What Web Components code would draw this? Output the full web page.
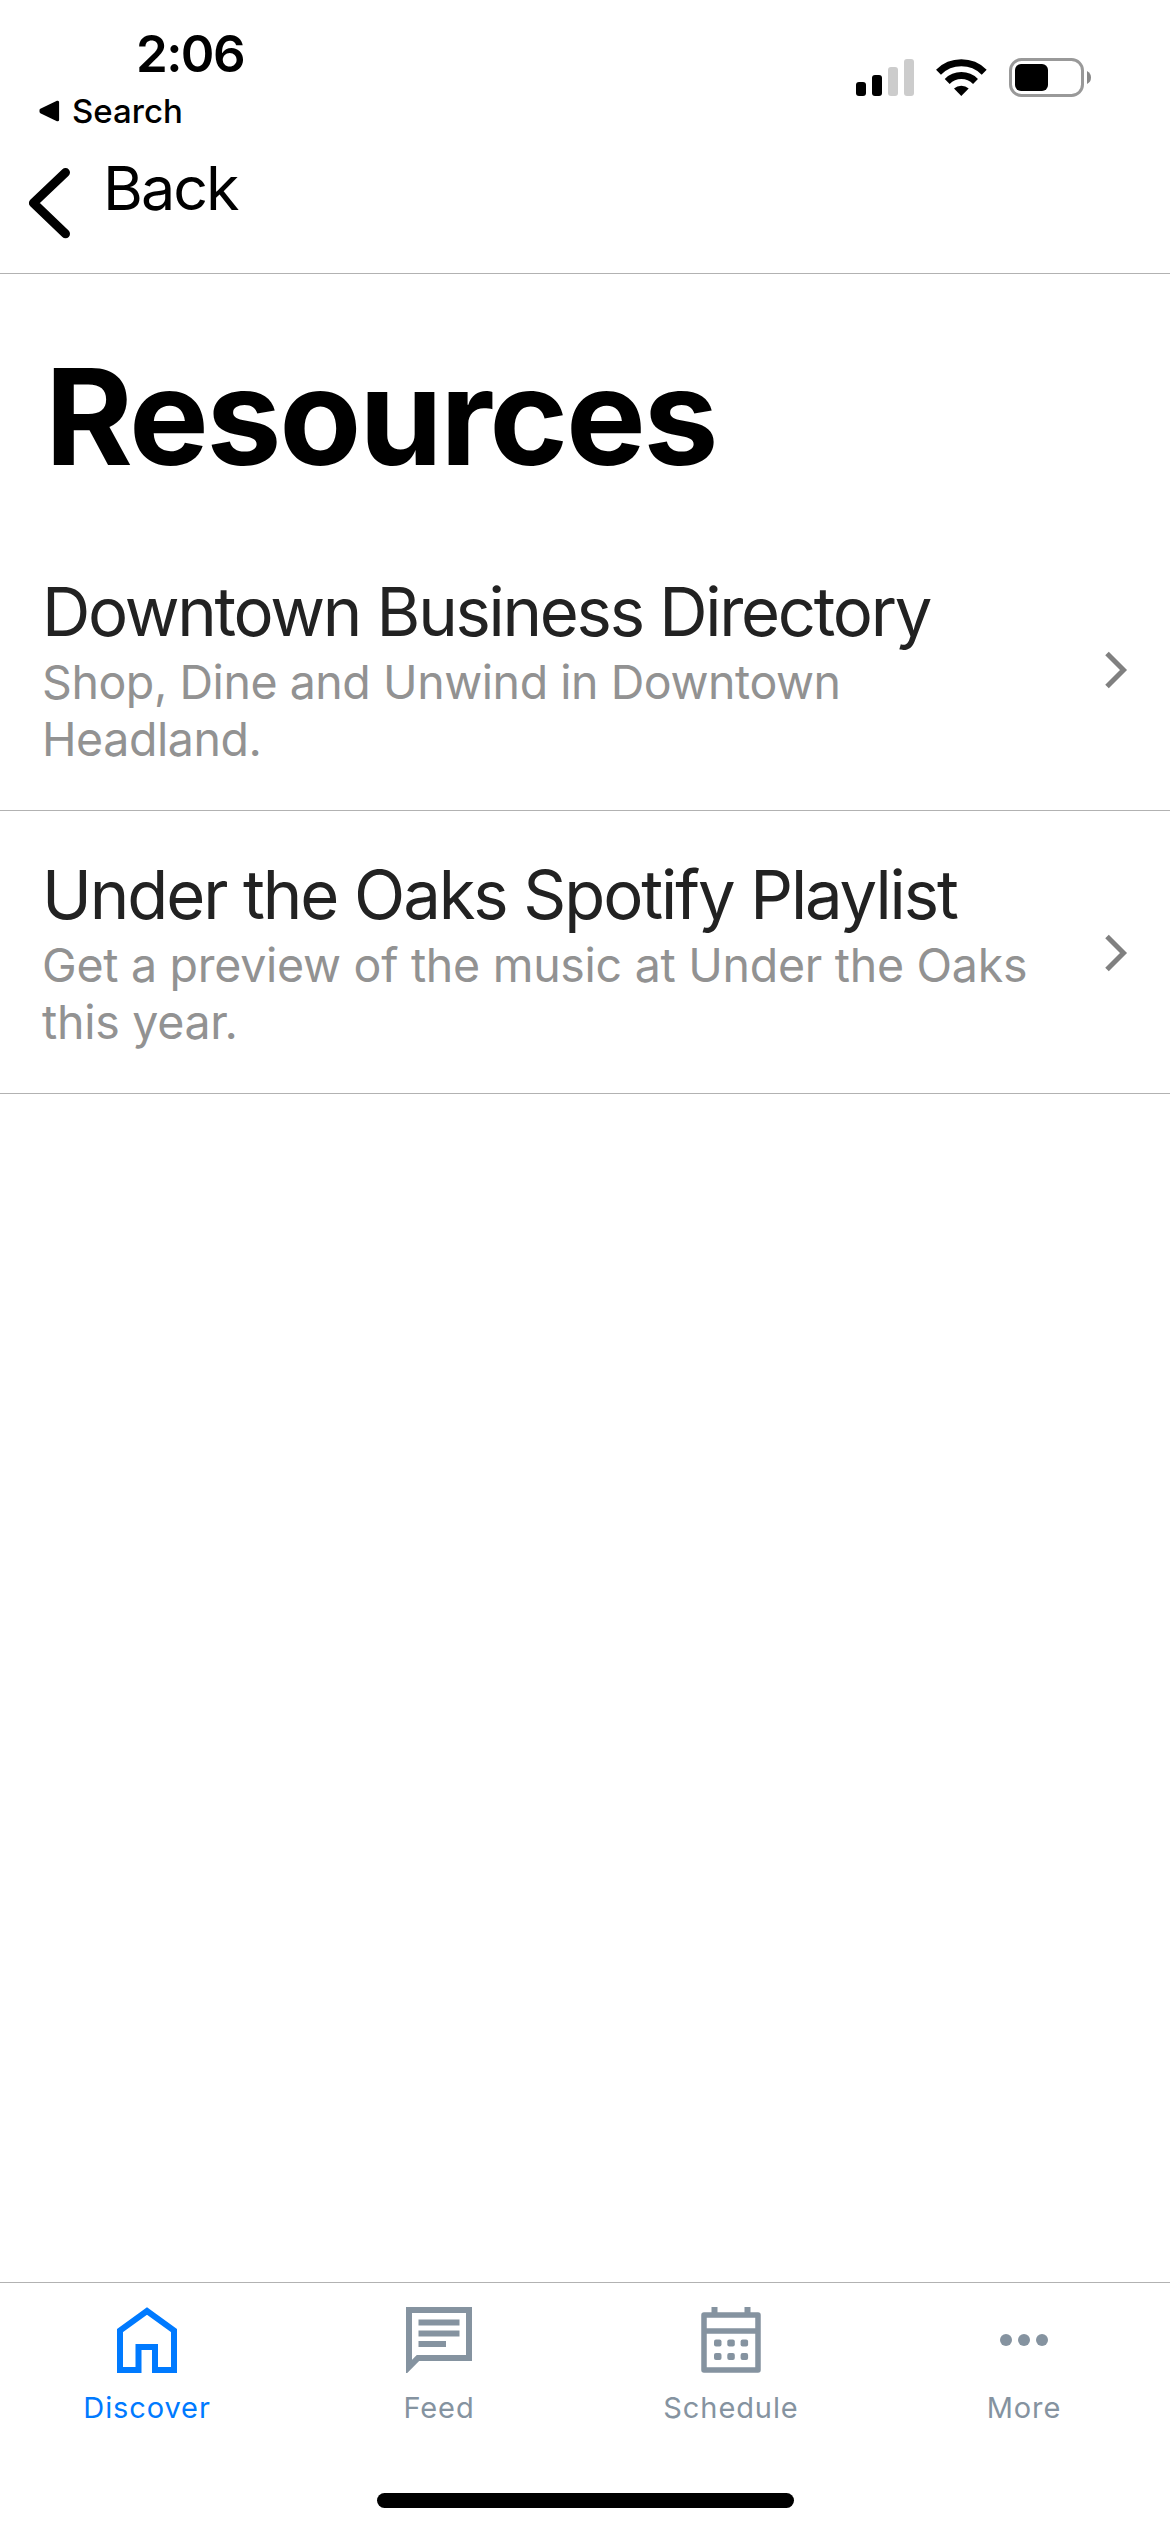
<!DOCTYPE html>
<html lang="en">
<head>
<meta charset="utf-8">
<title>Resources</title>
<style>
  html, body { margin: 0; background: #fff; }
  body { font-family: Inter, "Liberation Sans", sans-serif; color: #000; }
</style>
</head>
<body>
<app-screen>
  <status-bar slot="top" time="2:06" origin="Search"></status-bar>
  <nav-header slot="top">Back</nav-header>
  <page-title>Resources</page-title>
  <resource-item style="--title-tracking: -2.29px; --sub-tracking: -0.45px">
    <span slot="title">Downtown Business Directory</span>
    <span>Shop, Dine and Unwind in Downtown Headland.</span>
  </resource-item>
  <resource-item style="--title-tracking: -2.1px; --sub-tracking: -0.28px">
    <span slot="title">Under the Oaks Spotify Playlist</span>
    <span>Get a preview of the music at Under the Oaks this year.</span>
  </resource-item>
  <tab-bar slot="bottom">
    <tab-item icon="home" active>Discover</tab-item>
    <tab-item icon="feed">Feed</tab-item>
    <tab-item icon="calendar">Schedule</tab-item>
    <tab-item icon="more">More</tab-item>
  </tab-bar>
</app-screen>
<script>
const define = (name, html) => customElements.define(name, class extends HTMLElement {
  constructor() {
    super();
    this.attachShadow({ mode: 'open' }).innerHTML = typeof html === 'function' ? html(this) : html;
  }
});

define('app-screen', `
<style>
  :host { display: flex; flex-direction: column; height: 2532px; width: 1170px; overflow: hidden; background: #fff; }
  main { flex: 1; }
</style>
<slot name="top"></slot><main><slot></slot></main><slot name="bottom"></slot>`);

define('status-bar', el => `
<style>
  :host { display: flex; justify-content: space-between; height: 141px; box-sizing: border-box; padding: 24px 79px 0 39px; }
  .time { font-size: 51px; line-height: 60px; font-weight: 600; padding-left: 97px; letter-spacing: -1.6px; }
  .origin { display: flex; align-items: center; gap: 12px; margin-top: 7px; font-size: 33px; line-height: 40px; font-weight: 500; }
  .icons { display: flex; align-items: flex-start; padding-top: 33px; }
  svg { display: block; }
</style>
<div>
  <div class="time"><span>${el.getAttribute('time')}</span></div>
  <div class="origin">
    <svg width="21" height="22" viewBox="0 0 21 22"><path d="M2 10.2 18.6 2.2V19.8L2 11.8Z" fill="#000" stroke="#000" stroke-width="3" stroke-linejoin="round"/></svg>
    <span>${el.getAttribute('origin')}</span>
  </div>
</div>
<div class="icons">
  <svg width="235" height="42" viewBox="856 57 235 42">
    <rect x="856" y="82" width="10" height="14" rx="3"/>
    <rect x="872" y="75" width="10" height="21" rx="3"/>
    <rect x="888" y="67" width="10" height="29" rx="3" fill="#ccc"/>
    <rect x="904" y="59" width="10" height="37" rx="3" fill="#ccc"/>
    <path d="M961.3 96 954 88.6A10.6 10.6 0 0 1 968.7 88.6Z"/>
    <path d="M947.2 81.4A20.2 20.2 0 0 1 975.5 81.4" fill="none" stroke="#000" stroke-width="7"/>
    <path d="M938.5 72.2A32.6 32.6 0 0 1 984.2 72.2" fill="none" stroke="#000" stroke-width="7"/>
    <rect x="1010.5" y="59.5" width="72" height="36" rx="11" fill="none" stroke="#999" stroke-width="3"/>
    <rect x="1015" y="64" width="33" height="27" rx="6"/>
    <path d="M1087 71Q1091 73 1091 77.5T1087 84Z" fill="#888"/>
  </svg>
</div>`);

define('nav-header', `
<style>
  :host { display: flex; align-items: flex-start; height: 133px; box-sizing: border-box; border-bottom: 1px solid #b2b2b2; padding: 9px 0 0 27px; }
  svg { display: block; margin-top: 15px; }
  span { font-size: 61px; line-height: 76px; padding-left: 31px; letter-spacing: -2px; }
</style>
<svg width="45" height="76" viewBox="27 165 45 76"><path d="M65.5 172.5 33.4 203 65.5 233.8" fill="none" stroke="#000" stroke-width="9" stroke-linecap="round" stroke-linejoin="round"/></svg>
<span><slot></slot></span>`);

define('page-title', `
<style>
  :host { display: block; padding: 62px 0 32px 45px; font-size: 134px; line-height: 160px; font-weight: 700; letter-spacing: -2.3px; }
</style>
<slot></slot>`);

define('resource-item', `
<style>
  :host { display: flex; align-items: center; height: 283px; box-sizing: border-box; border-bottom: 1px solid #b2b2b2; padding: 3px 42px 0 42px; }
  .text { flex: 1; }
  .title { font-size: 67px; line-height: 78px; color: #222; white-space: nowrap; letter-spacing: var(--title-tracking); }
  .sub { font-size: 46.5px; line-height: 57px; color: #929292; margin-top: 3px; width: 1010px; letter-spacing: var(--sub-tracking); }
  svg { display: block; margin-bottom: 2px; }
</style>
<div class="text">
  <div class="title"><slot name="title"></slot></div>
  <div class="sub"><slot></slot></div>
</div>
<svg width="24" height="38" viewBox="0 0 24 38"><path d="M3 2.5 19.5 19 3 35.5" fill="none" stroke="#808080" stroke-width="5"/></svg>`);

define('tab-bar', `
<style>
  :host { display: grid; grid-template-columns: 294px 290px 294px 292px; height: 250px; box-sizing: border-box; border-top: 1px solid #b2b2b2; grid-template-rows: 210px 15px; }
  .home { grid-column: 1 / -1; justify-self: center; width: 417px; height: 15px; border-radius: 8px; background: #000; }
</style>
<slot></slot><div class="home"></div>`);

const icons = {
  home: `<path d="M24.500 63H6V23.500L33 4 60 23.500V63H41V40H24.500Z" fill="none" stroke="currentColor" stroke-width="6"/>`,
  feed: `<path d="M3 60V3H63V51H12Z" fill="none" stroke="currentColor" stroke-width="6"/><path d="M0 56V66L13 53H5Z" fill="currentColor"/><path d="M12.5 15.5H53.5M12.5 26.5H53.5M12.5 37H40" stroke="currentColor" stroke-width="6"/>`,
  calendar: `<path d="M6 8H60V63H6ZM6 24H60" fill="none" stroke="currentColor" stroke-width="5.5" stroke-linejoin="round"/><path d="M16.5 0V8M49.5 0V8" stroke="currentColor" stroke-width="6"/><g fill="currentColor"><rect x="16" y="32.500" width="7.500" height="7" rx="2"/><rect x="29.300" y="32.500" width="7.500" height="7" rx="2"/><rect x="42.600" y="32.500" width="7.500" height="7" rx="2"/><rect x="16" y="46" width="7.500" height="7" rx="2"/><rect x="29.300" y="46" width="7.500" height="7" rx="2"/><rect x="42.600" y="46" width="7.500" height="7" rx="2"/></g>`,
  more: `<g fill="currentColor"><circle cx="15" cy="33" r="6"/><circle cx="33" cy="33" r="6"/><circle cx="51" cy="33" r="6"/></g>`
};
define('tab-item', el => `
<style>
  :host { display: flex; flex-direction: column; align-items: center; gap: 17px; padding-top: 24px; color: #8593a0; font-size: 29px; line-height: 36px; letter-spacing: 0.9px; }
  :host([active]) { color: #007aff; }
  svg { display: block; }
</style>
<svg width="66" height="66" viewBox="0 0 66 66">${icons[el.getAttribute('icon')]}</svg>
<span><slot></slot></span>`);
</script>
</body>
</html>
